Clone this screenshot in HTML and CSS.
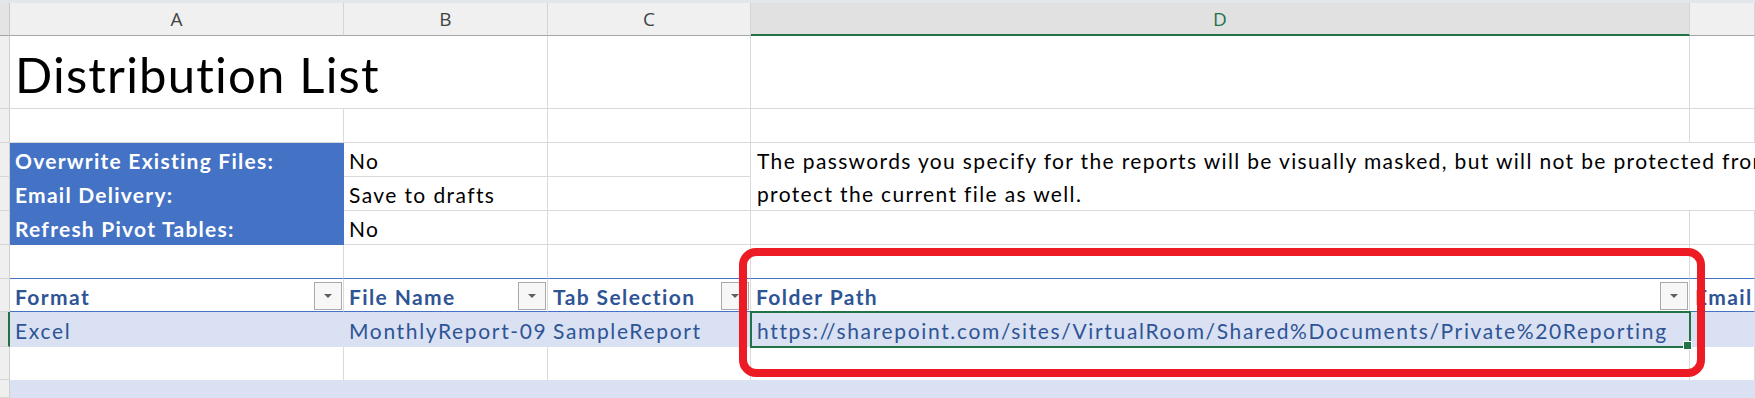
FILE: index.html
```html
<!DOCTYPE html>
<html>
<head>
<meta charset="utf-8">
<title>Distribution List</title>
<link rel="stylesheet" href="styles.css">
</head>
<body>
<div class="sheet">
  <div class="topband"></div>

  <div class="corner"></div>
  <div class="colhead">A</div>
  <div class="colhead">B</div>
  <div class="colhead">C</div>
  <div class="colhead colhead-sel">D</div>
  <div class="colhead"></div>

  <div class="rowhead"></div>
  <div class="cell title">Distribution List</div>
  <div class="cell"></div>
  <div class="cell"></div>
  <div class="cell"></div>

  <div class="rowhead"></div>
  <div class="cell"></div>
  <div class="cell"></div>
  <div class="cell"></div>
  <div class="cell"></div>
  <div class="cell"></div>

  <div class="rowhead"></div>
  <div class="cell label">Overwrite Existing Files:</div>
  <div class="cell">No</div>
  <div class="cell"></div>
  <div class="cell note">The passwords you specify for the reports will be visually masked, but will not be protected from<br>protect the current file as well.</div>

  <div class="rowhead"></div>
  <div class="cell label">Email Delivery:</div>
  <div class="cell">Save to drafts</div>
  <div class="cell"></div>

  <div class="rowhead"></div>
  <div class="cell label">Refresh Pivot Tables:</div>
  <div class="cell">No</div>
  <div class="cell"></div>
  <div class="cell"></div>
  <div class="cell"></div>

  <div class="rowhead"></div>
  <div class="cell table-top"></div>
  <div class="cell table-top"></div>
  <div class="cell table-top"></div>
  <div class="cell table-top"></div>
  <div class="cell table-top"></div>

  <div class="rowhead"></div>
  <div class="cell th"><span class="th-text">Format</span><span class="filter"><span class="arrow"></span></span></div>
  <div class="cell th"><span class="th-text">File Name</span><span class="filter"><span class="arrow"></span></span></div>
  <div class="cell th"><span class="th-text">Tab Selection</span><span class="filter"><span class="arrow"></span></span></div>
  <div class="cell th"><span class="th-text">Folder Path</span><span class="filter"><span class="arrow"></span></span></div>
  <div class="cell th"><span class="th-text">Email</span></div>

  <div class="rowhead rowhead-sel"></div>
  <div class="cell td">Excel</div>
  <div class="cell td">MonthlyReport-09</div>
  <div class="cell td">SampleReport</div>
  <div class="cell td active">https://sharepoint.com/sites/VirtualRoom/Shared%Documents/Private%20Reporting<span class="handle"></span></div>
  <div class="cell td"></div>

  <div class="rowhead"></div>
  <div class="cell plain"></div>
  <div class="cell plain"></div>
  <div class="cell plain"></div>
  <div class="cell plain"></div>
  <div class="cell plain"></div>

  <div class="rowhead"></div>
  <div class="band"></div>

  <div class="annot"></div>
</div>
</body>
</html>
```

FILE: styles.css
```css
* {
  box-sizing: border-box;
  margin: 0;
  padding: 0;
}

html,
body {
  width: 1755px;
  height: 398px;
  overflow: hidden;
  background: #ffffff;
}

body {
  font-family: Lato, "Liberation Sans", sans-serif;
  font-size: 21px;
  line-height: 1.2;
  color: #000000;
  font-variant-ligatures: none;
}

.sheet {
  position: relative;
  display: grid;
  grid-template-columns: 10px 334px 204px 203px 939px 65px;
  grid-template-rows: 3px 33px 73px 34px 34px 34px 34px 34px 33px 35px 33px 18px;
  width: 1755px;
  height: 398px;
}

.topband {
  grid-column: 1 / -1;
  background: #e3e6ec;
}

.corner {
  background: #e4e4e4;
  border-right: 1px solid #c8c8c8;
  border-bottom: 1px solid #a6a6a6;
}

.colhead {
  display: flex;
  align-items: center;
  justify-content: center;
  background: #f0f0f0;
  border-right: 1px solid #d4d4d4;
  border-bottom: 1px solid #a6a6a6;
  font-family: "Open Sans", "Noto Sans", sans-serif;
  font-size: 19px;
  color: #444444;
  padding-top: 1px;
}

.colhead-sel {
  background: #e1e1e1;
  color: #217346;
  border-bottom: 2px solid #217346;
}

.rowhead {
  background: #efefef;
  border-right: 1px solid #cfcfcf;
  border-bottom: 1px solid #d6d6d6;
}

.rowhead-sel {
  background: #e2e2e2;
  border-right: 2px solid #217346;
}

.cell {
  display: flex;
  align-items: flex-end;
  padding: 0 4px 3px 5px;
  border-right: 1px solid #dadada;
  border-bottom: 1px solid #dadada;
  white-space: nowrap;
  overflow: hidden;
  letter-spacing: 1.4px;
}

.title {
  grid-column: span 2;
  font-size: 49px;
  letter-spacing: 1.2px;
  padding-left: 5px;
  padding-bottom: 4px;
}

.label {
  background: #4472c4;
  border-color: #4472c4;
  color: #ffffff;
  font-weight: 700;
  letter-spacing: 1.25px;
}

.note {
  grid-column: 5 / 7;
  grid-row: 5 / 7;
  display: block;
  padding: 1px 0 0 6px;
  line-height: 33.4px;
  border-right: none;
  letter-spacing: 1.35px;
}

.table-top {
  border-bottom-color: #4472c4;
}

.th {
  justify-content: space-between;
  padding: 0 1px 0 5px;
  border-bottom-color: #4472c4;
  font-weight: 700;
  color: #2f5496;
  letter-spacing: 1.4px;
}

.th-text {
  padding-bottom: 2px;
}

.filter {
  display: flex;
  align-items: center;
  justify-content: center;
  flex: none;
  width: 28px;
  height: 28px;
  margin-bottom: 1px;
  background: #f7f7f7;
  border: 1px solid #a9a9a9;
}

.arrow {
  width: 0;
  height: 0;
  border-left: 4px solid transparent;
  border-right: 4px solid transparent;
  border-top: 4px solid #5f5f5f;
}

.td {
  background: #d9e1f2;
  border-color: #d9e1f2;
  border-bottom: none;
  padding-bottom: 4px;
  color: #2f5496;
  letter-spacing: 1.65px;
}

.active {
  position: relative;
  overflow: visible;
  padding-left: 6px;
  outline: 2px solid #217346;
  outline-offset: -1px;
}

.handle {
  position: absolute;
  right: -2px;
  bottom: -2px;
  width: 7px;
  height: 7px;
  background: #217346;
  box-shadow: 0 0 0 1px #ffffff;
}

.plain {
  border-bottom: none;
}

.band {
  grid-column: 2 / -1;
  background: #d9e1f2;
}

.annot {
  position: absolute;
  left: 739px;
  top: 248px;
  width: 966px;
  height: 129px;
  border: 8px solid #ed1c24;
  border-radius: 17px;
  pointer-events: none;
}
```
